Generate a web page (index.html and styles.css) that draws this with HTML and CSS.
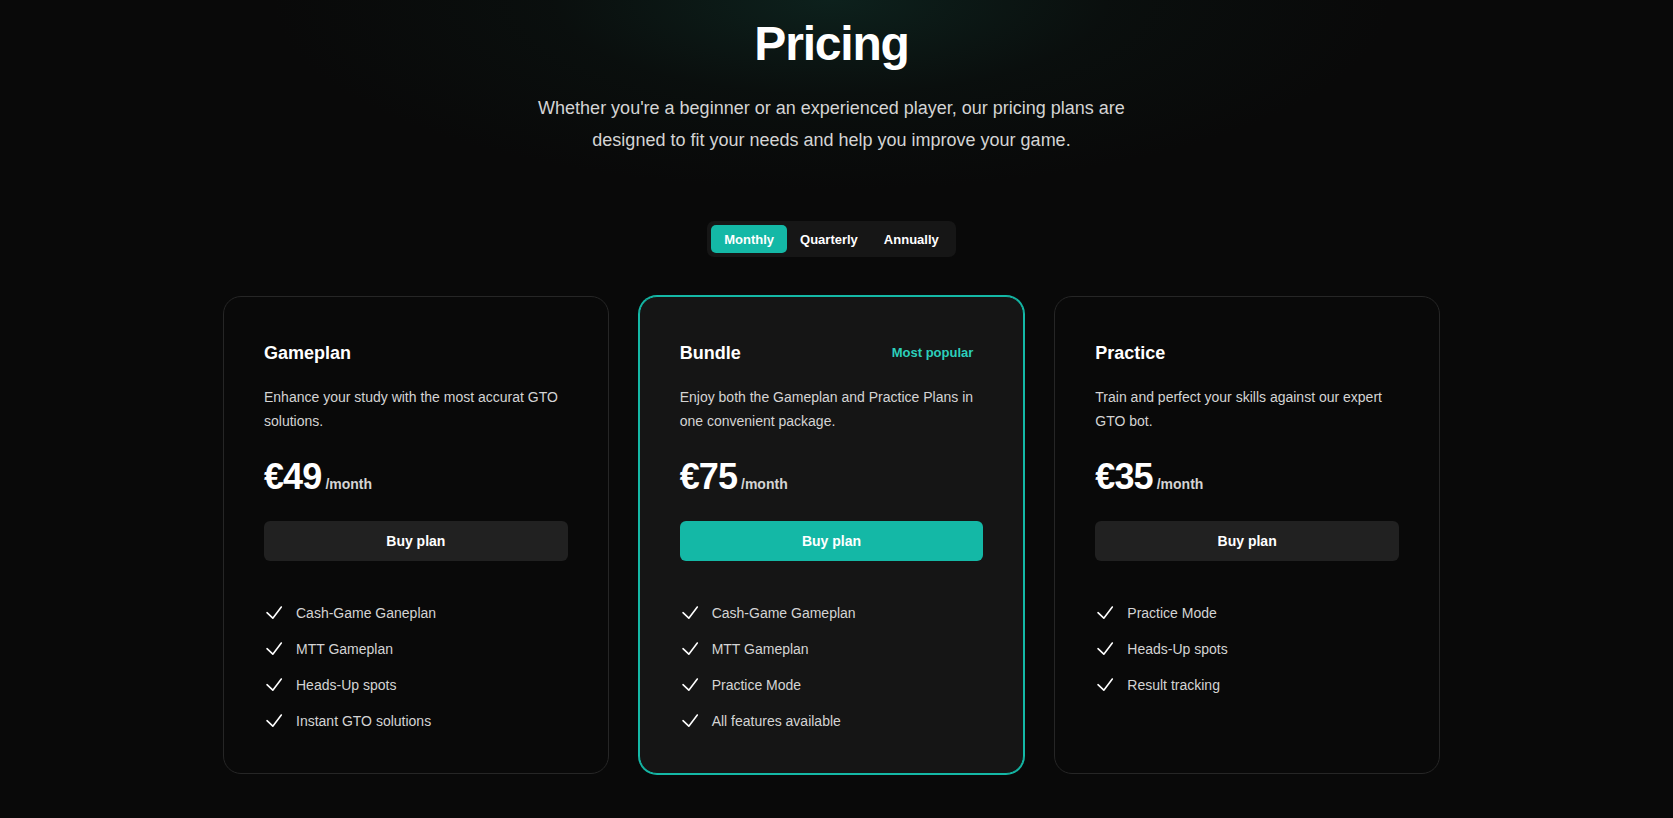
FILE: index.html
```html
<!DOCTYPE html>
<html lang="en">
<head>
<meta charset="utf-8">
<title>Pricing</title>
<link rel="stylesheet" href="styles.css">
</head>
<body>
<div class="page">
  <div class="glow"></div>
  <header class="hero">
    <h1 class="title">Pricing</h1>
    <p class="subtitle">Whether you're a beginner or an experienced player, our pricing plans are designed to fit your needs and help you improve your game.</p>
  </header>

  <div class="toggle-wrap">
    <div class="toggle">
      <button class="toggle-btn active">Monthly</button>
      <button class="toggle-btn">Quarterly</button>
      <button class="toggle-btn">Annually</button>
    </div>
  </div>

  <div class="plans">
    <section class="card">
      <div class="card-head"><h3 class="card-title">Gameplan</h3></div>
      <p class="card-desc">Enhance your study with the most accurat GTO solutions.</p>
      <p class="price"><span class="amount">€49</span><span class="per">/month</span></p>
      <button class="buy">Buy plan</button>
      <ul class="features">
        <li><svg class="check" viewBox="0 0 20 24"><path d="M3 11.7L8.8 17.2L17.3 6"/></svg>Cash-Game Ganeplan</li>
        <li><svg class="check" viewBox="0 0 20 24"><path d="M3 11.7L8.8 17.2L17.3 6"/></svg>MTT Gameplan</li>
        <li><svg class="check" viewBox="0 0 20 24"><path d="M3 11.7L8.8 17.2L17.3 6"/></svg>Heads-Up spots</li>
        <li><svg class="check" viewBox="0 0 20 24"><path d="M3 11.7L8.8 17.2L17.3 6"/></svg>Instant GTO solutions</li>
      </ul>
    </section>

    <section class="card featured">
      <div class="card-head"><h3 class="card-title">Bundle</h3><span class="badge">Most popular</span></div>
      <p class="card-desc">Enjoy both the Gameplan and Practice Plans in one convenient package.</p>
      <p class="price"><span class="amount">€75</span><span class="per">/month</span></p>
      <button class="buy primary">Buy plan</button>
      <ul class="features">
        <li><svg class="check" viewBox="0 0 20 24"><path d="M3 11.7L8.8 17.2L17.3 6"/></svg>Cash-Game Gameplan</li>
        <li><svg class="check" viewBox="0 0 20 24"><path d="M3 11.7L8.8 17.2L17.3 6"/></svg>MTT Gameplan</li>
        <li><svg class="check" viewBox="0 0 20 24"><path d="M3 11.7L8.8 17.2L17.3 6"/></svg>Practice Mode</li>
        <li><svg class="check" viewBox="0 0 20 24"><path d="M3 11.7L8.8 17.2L17.3 6"/></svg>All features available</li>
      </ul>
    </section>

    <section class="card">
      <div class="card-head"><h3 class="card-title">Practice</h3></div>
      <p class="card-desc">Train and perfect your skills against our expert GTO bot.</p>
      <p class="price"><span class="amount">€35</span><span class="per">/month</span></p>
      <button class="buy">Buy plan</button>
      <ul class="features">
        <li><svg class="check" viewBox="0 0 20 24"><path d="M3 11.7L8.8 17.2L17.3 6"/></svg>Practice Mode</li>
        <li><svg class="check" viewBox="0 0 20 24"><path d="M3 11.7L8.8 17.2L17.3 6"/></svg>Heads-Up spots</li>
        <li><svg class="check" viewBox="0 0 20 24"><path d="M3 11.7L8.8 17.2L17.3 6"/></svg>Result tracking</li>
      </ul>
    </section>
  </div>
</div>
</body>
</html>
```

FILE: styles.css
```css
* { box-sizing: border-box; }

html, body {
  margin: 0;
  padding: 0;
  background: #090909;
}

body {
  font-family: "Liberation Sans", Arial, sans-serif;
  color: #fff;
}

.page {
  position: relative;
  min-height: 818px;
  padding-right: 10px;
  overflow: hidden;
}

.glow {
  position: absolute;
  left: 0;
  top: 0;
  width: 1663px;
  height: 300px;
  background: radial-gradient(ellipse 560px 190px at 50% 0%, rgba(16, 52, 44, 0.55), rgba(12, 28, 24, 0.3) 50%, rgba(9, 9, 9, 0) 100%);
  pointer-events: none;
}

.hero {
  position: relative;
  padding-top: 20px;
  text-align: center;
}

.title {
  margin: 0;
  font-size: 48px;
  line-height: 48px;
  font-weight: 700;
  letter-spacing: -1.2px;
  color: #fff;
}

.subtitle {
  margin: 24px auto 0;
  max-width: 600px;
  font-size: 18px;
  line-height: 32px;
  color: #d4d4d4;
}

.toggle-wrap {
  position: relative;
  display: flex;
  justify-content: center;
  margin-top: 65px;
}

.toggle {
  display: flex;
  padding: 4px;
  background: #161616;
  border-radius: 7px;
}

.toggle-btn {
  height: 28px;
  padding: 0 13px;
  border: 0;
  border-radius: 5px;
  background: transparent;
  color: #fff;
  font-family: inherit;
  font-size: 13px;
  font-weight: 700;
  cursor: pointer;
}

.toggle-btn.active {
  background: #14b8a6;
}

.plans {
  position: relative;
  display: grid;
  grid-template-columns: repeat(3, 1fr);
  gap: 30px;
  width: 1217px;
  margin: 39px auto 0;
}

.card {
  border: 1px solid #262626;
  border-radius: 18px;
  padding: 40px;
  background: #090909;
}

.card.featured {
  border-color: #14b8a6;
  box-shadow: 0 0 0 1px #14b8a6;
  background: #151515;
}

.card-head {
  display: flex;
  align-items: center;
  justify-content: space-between;
}

.card-title {
  margin: 0;
  font-size: 18px;
  line-height: 32px;
  font-weight: 700;
  color: #fff;
}

.badge {
  padding: 0 10px;
  font-size: 13px;
  line-height: 20px;
  font-weight: 700;
  color: #2ccfbb;
}

.card-desc {
  margin: 16px 0 0;
  font-size: 14px;
  line-height: 24px;
  color: #d4d4d4;
}

.price {
  display: flex;
  align-items: baseline;
  gap: 4px;
  margin: 24px 0 0;
}

.amount {
  font-size: 36px;
  line-height: 40px;
  font-weight: 700;
  letter-spacing: -0.9px;
  color: #fff;
}

.per {
  font-size: 14px;
  line-height: 24px;
  font-weight: 700;
  color: #d4d4d4;
}

.buy {
  display: block;
  width: 100%;
  height: 40px;
  margin-top: 24px;
  border: 0;
  border-radius: 6px;
  background: #212121;
  color: #fff;
  font-family: inherit;
  font-size: 14px;
  font-weight: 700;
  cursor: pointer;
}

.buy.primary {
  background: #14b8a6;
}

.features {
  list-style: none;
  margin: 40px 0 0;
  padding: 0;
  display: flex;
  flex-direction: column;
  gap: 12px;
}

.features li {
  display: flex;
  gap: 12px;
  font-size: 14px;
  line-height: 24px;
  color: #d4d4d4;
}

.check {
  width: 20px;
  height: 24px;
  flex: none;
  fill: none;
  stroke: #fff;
  stroke-width: 1.6;
  stroke-linecap: round;
  stroke-linejoin: round;
}
```
